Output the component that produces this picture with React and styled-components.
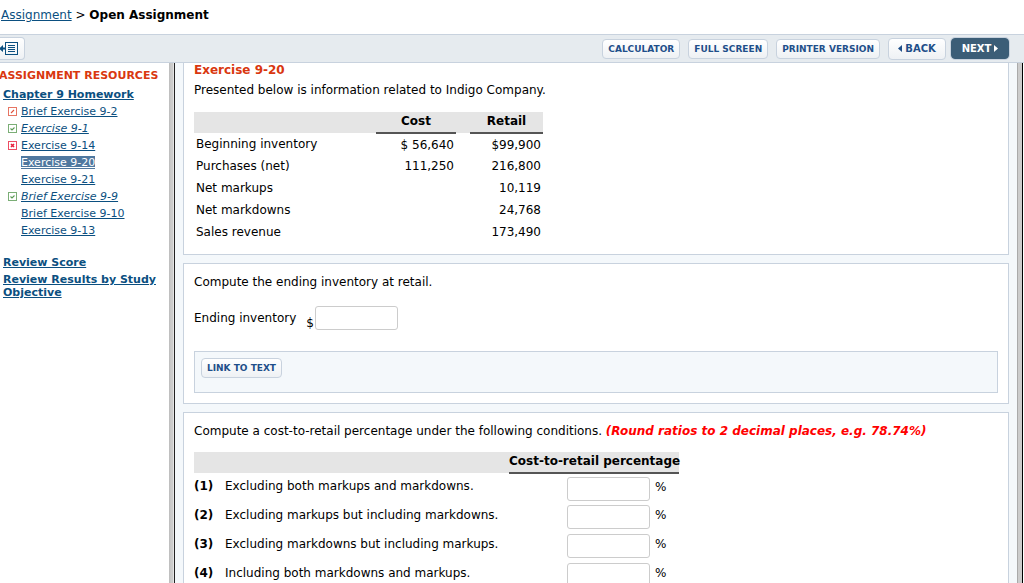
import React from 'react';
import styled, { createGlobalStyle, css } from 'styled-components';

const resources = [
  { name: 'Brief Exercise 9-2', status: 'partial' },
  { name: 'Exercise 9-1', status: 'correct' },
  { name: 'Exercise 9-14', status: 'wrong' },
  { name: 'Exercise 9-20', active: true },
  { name: 'Exercise 9-21' },
  { name: 'Brief Exercise 9-9', status: 'correct' },
  { name: 'Brief Exercise 9-10' },
  { name: 'Exercise 9-13' },
];

const inventory = [
  ['Beginning inventory', '$ 56,640', '$99,900'],
  ['Purchases (net)', '111,250', '216,800'],
  ['Net markups', '', '10,119'],
  ['Net markdowns', '', '24,768'],
  ['Sales revenue', '', '173,490'],
];

const conditions = [
  'Excluding both markups and markdowns.',
  'Excluding markups but including markdowns.',
  'Excluding markdowns but including markups.',
  'Including both markdowns and markups.',
];

const marks = {
  partial: { color: '#e0523c', path: 'M3 6L6 3' },
  correct: { color: '#5a9a54', path: 'M2.5 4.5L4 6L6.5 3.5' },
  wrong: { color: '#e8203c', path: 'M3 3L6 6M6 3L3 6' },
};

const StatusIcon = ({ status }) => {
  const mark = marks[status];
  return (
    <svg width="9" height="9" viewBox="0 0 9 9" fill="none" stroke={mark.color}>
      <rect x="0.5" y="0.5" width="8" height="8" strokeOpacity="0.8" />
      <path d={mark.path} strokeWidth={status === 'wrong' ? 1.6 : 1.1} />
    </svg>
  );
};

const CollapseIcon = () => (
  <svg width="18" height="13" viewBox="0 0 18 13" fill="none" stroke="#0b4f80">
    <path d="M-1 6.5L3 3V5.5H5V7.5H3V10Z" fill="#0b4f80" stroke="none" />
    <rect x="5.5" y="0.5" width="12" height="12" />
    <path d="M8 3.5H15M8 5.5H15M8 7.5H15M8 9.5H15" />
  </svg>
);

const Arrow = ({ left }) => (
  <svg width="4" height="7" viewBox="0 0 4 7" fill="currentColor">
    <path d={left ? 'M4 0V7L0 3.5Z' : 'M0 0V7L4 3.5Z'} />
  </svg>
);

const App = () => (
  <Page>
    <GlobalStyle />
    <Breadcrumb>
      <Link href="#assignment">Assignment</Link> &gt; <strong>Open Assignment</strong>
    </Breadcrumb>
    <Toolbar>
      <CollapseButton type="button">
        <CollapseIcon />
      </CollapseButton>
      <Tools>
        <Button type="button">CALCULATOR</Button>
        <Button type="button">FULL SCREEN</Button>
        <Button type="button">PRINTER VERSION</Button>
      </Tools>
      <Pager>
        <NavButton type="button">
          <Arrow left />
          BACK
        </NavButton>
        <NavButton type="button" $primary>
          NEXT
          <Arrow />
        </NavButton>
      </Pager>
    </Toolbar>
    <Body>
      <Sidebar>
        <SidebarTitle>ASSIGNMENT RESOURCES</SidebarTitle>
        <SidebarHeading href="#chapter-9">Chapter 9 Homework</SidebarHeading>
        <ResourceList>
          {resources.map(({ name, status, active }) => (
            <Resource key={name}>
              <Status>{status && <StatusIcon status={status} />}</Status>
              <ResourceLink href="#exercise" $active={active} $done={status === 'correct'}>
                {name}
              </ResourceLink>
            </Resource>
          ))}
        </ResourceList>
        <SidebarHeading href="#score">Review Score</SidebarHeading>
        <SidebarHeading href="#results">Review Results by Study Objective</SidebarHeading>
      </Sidebar>
      <Splitter />
      <Main>
        <Card $first>
          <Title>Exercise 9-20</Title>
          <Text>Presented below is information related to Indigo Company.</Text>
          <InventoryTable>
            <colgroup>
              <Col $width={182} />
              <Col $width={80} />
              <Col $width={14} />
              <Col $width={73} />
            </colgroup>
            <thead>
              <tr>
                <HeadCell />
                <HeadCell $line>Cost</HeadCell>
                <HeadCell />
                <HeadCell $line>Retail</HeadCell>
              </tr>
            </thead>
            <tbody>
              {inventory.map(([name, cost, retail]) => (
                <tr key={name}>
                  <Cell>{name}</Cell>
                  <Cell $right>{cost}</Cell>
                  <Cell />
                  <Cell $right>{retail}</Cell>
                </tr>
              ))}
            </tbody>
          </InventoryTable>
        </Card>
        <Card>
          <Text>Compute the ending inventory at retail.</Text>
          <AnswerRow>
            <label htmlFor="ending-inventory">Ending inventory</label>
            <Currency>$</Currency>
            <Input id="ending-inventory" type="text" />
          </AnswerRow>
          <LinkPanel>
            <Button type="button">LINK TO TEXT</Button>
          </LinkPanel>
        </Card>
        <Card>
          <Text>
            Compute a cost-to-retail percentage under the following conditions.{' '}
            <Hint>(Round ratios to 2 decimal places, e.g. 78.74%)</Hint>
          </Text>
          <RatioTable>
            <colgroup>
              <Col $width={31} />
              <Col $width={284} />
              <Col $width={170} />
            </colgroup>
            <thead>
              <tr>
                <HeadCell />
                <HeadCell />
                <HeadCell $line>Cost-to-retail percentage</HeadCell>
              </tr>
            </thead>
            <tbody>
              {conditions.map((condition, i) => (
                <tr key={condition}>
                  <RatioCell>
                    <strong>({i + 1})</strong>
                  </RatioCell>
                  <RatioCell>
                    <label htmlFor={'ratio_' + i}>{condition}</label>
                  </RatioCell>
                  <RatioCell $answer>
                    <Ratio>
                      <Input id={'ratio_' + i} type="text" />%
                    </Ratio>
                  </RatioCell>
                </tr>
              ))}
            </tbody>
          </RatioTable>
        </Card>
      </Main>
      <Gutter />
    </Body>
  </Page>
);

export default App;

//#region styles
const GlobalStyle = createGlobalStyle`
  * {
    box-sizing: border-box;
  }

  body {
    margin: 0;
    background: #fff;
    color: #000;
    font-family: Verdana, 'DejaVu Sans', sans-serif;
    font-size: 12px;
    line-height: 16px;
  }
`;

const Page = styled.div`
  display: flex;
  flex-direction: column;
  height: 100vh;
  overflow: hidden;
`;

const Breadcrumb = styled.nav`
  padding: 7px 1px 11px;
`;

const Link = styled.a`
  color: #0b4f80;
`;

const Toolbar = styled.div`
  display: flex;
  align-items: center;
  flex-shrink: 0;
  height: 29px;
  padding-right: 15px;
  background: #e6ebef;
  border-top: 1px solid #c8d2de;
  border-bottom: 1px solid #c8d2de;
`;

const Button = styled.button`
  height: 20px;
  padding: 0 5px;
  border: 1px solid #c8d2de;
  border-radius: 4px;
  background: linear-gradient(#fff, #eef1f4);
  color: #1f4f8a;
  font-family: inherit;
  font-size: 9px;
  font-weight: bold;
  line-height: 16px;
`;

const CollapseButton = styled(Button)`
  display: flex;
  align-items: center;
  width: 25px;
  height: 23px;
  padding: 0;
  border-left: 0;
  border-radius: 0 4px 4px 0;
`;

const Tools = styled.div`
  display: flex;
  gap: 8px;
  margin-left: auto;
`;

const Pager = styled.div`
  display: flex;
  align-items: center;
  gap: 5px;
  margin-left: 8px;
`;

const NavButton = styled(Button)`
  display: flex;
  align-items: center;
  justify-content: center;
  gap: 3px;
  width: 58px;
  height: 22px;
  font-size: 10px;
  ${props =>
    props.$primary &&
    css`
      height: 21px;
      background: #3b5d77;
      border-color: #3b5d77;
      box-shadow: 0 0 0 1px #c8d2de;
      color: #fff;
    `};
`;

const Body = styled.div`
  display: flex;
  flex: 1;
  min-height: 0;
`;

const Sidebar = styled.aside`
  flex: 0 0 169px;
  padding: 5px 3px;
  overflow: hidden;
`;

const SidebarTitle = styled.h2`
  margin: 0 0 4px -4px;
  color: #d9370f;
  font-size: 11px;
  line-height: 16px;
  white-space: nowrap;
`;

const SidebarHeading = styled.a`
  display: block;
  margin-bottom: 4px;
  color: #0b4f80;
  font-size: 11px;
  font-weight: bold;
  line-height: 13px;
`;

const ResourceList = styled.ul`
  margin: -2px 0 17px;
  padding: 0 0 0 5px;
  list-style: none;
`;

const Resource = styled.li`
  display: flex;
  align-items: center;
  height: 17px;
`;

const Status = styled.span`
  display: flex;
  width: 13px;
`;

const ResourceLink = styled.a`
  color: ${props => (props.$active ? '#fff' : '#0b4f80')};
  background: ${props => (props.$active ? '#4f789f' : 'none')};
  font-size: 11px;
  font-style: ${props => (props.$done ? 'italic' : 'normal')};
  line-height: 13px;
`;

const Splitter = styled.div`
  flex: 0 0 6px;
  background: linear-gradient(to right, #bbb, #ccc 2px, #ccc 4px, #e4e4e4 4px);
  border-right: 1px solid #222;
`;

const Gutter = styled.div`
  flex: 0 0 6px;
  margin-right: 1px;
  background: #ccc;
  border-left: 1px solid #aaa;
  border-right: 1px solid #000;
`;

const Main = styled.main`
  flex: 1;
  min-width: 0;
  padding: 0 8px;
  overflow: hidden;
  background: #f4f8fb;
`;

const Card = styled.section`
  margin-bottom: 8px;
  padding: ${props => (props.$first ? '0 10px 11px' : '10px')};
  background: #fff;
  border: 1px solid #c8d2de;
  border-top-width: ${props => (props.$first ? 0 : '1px')};
`;

const Title = styled.h1`
  margin: 0 0 5px;
  color: #d9370f;
  font-size: 12px;
  line-height: 14px;
`;

const Text = styled.p`
  margin: 0;
`;

const Hint = styled.em`
  color: #f00;
  font-weight: bold;
`;

const InventoryTable = styled.table`
  table-layout: fixed;
  width: 349px;
  margin-top: 14px;
  border-collapse: collapse;
`;

const RatioTable = styled.table`
  table-layout: fixed;
  width: 485px;
  margin-top: 13px;
  border-collapse: collapse;
`;

const Col = styled.col`
  width: ${props => props.$width}px;
`;

const HeadCell = styled.th`
  height: 21px;
  padding: 0 0 3px;
  background: #e5e5e5;
  border-bottom: ${props => (props.$line ? '2px solid #555' : 0)};
  line-height: 16px;
  white-space: nowrap;
`;

const Cell = styled.td`
  height: 22px;
  padding: 0 2px;
  text-align: ${props => (props.$right ? 'right' : 'left')};
`;

const RatioCell = styled.td`
  height: 29px;
  padding: ${props => (props.$answer ? '3px 0 0' : '5px 0 0')};
  line-height: ${props => (props.$answer ? '20px' : '16px')};
  vertical-align: top;
  white-space: nowrap;
`;

const Input = styled.input`
  width: 83px;
  height: 24px;
  border: 1px solid #ccc;
  border-radius: 3px;
  background: #fff;
`;

const AnswerRow = styled.div`
  display: flex;
  align-items: center;
  margin: 16px 0 21px;
`;

const Currency = styled.span`
  align-self: flex-end;
  margin: 0 1px 0 10px;
  line-height: 14px;
`;

const LinkPanel = styled.div`
  height: 42px;
  padding: 6px;
  background: #f4f8fb;
  border: 1px solid #c8d2de;
`;

const Ratio = styled.div`
  display: flex;
  align-items: flex-start;
  gap: 5px;
  padding-left: 58px;
`;

//#endregion
